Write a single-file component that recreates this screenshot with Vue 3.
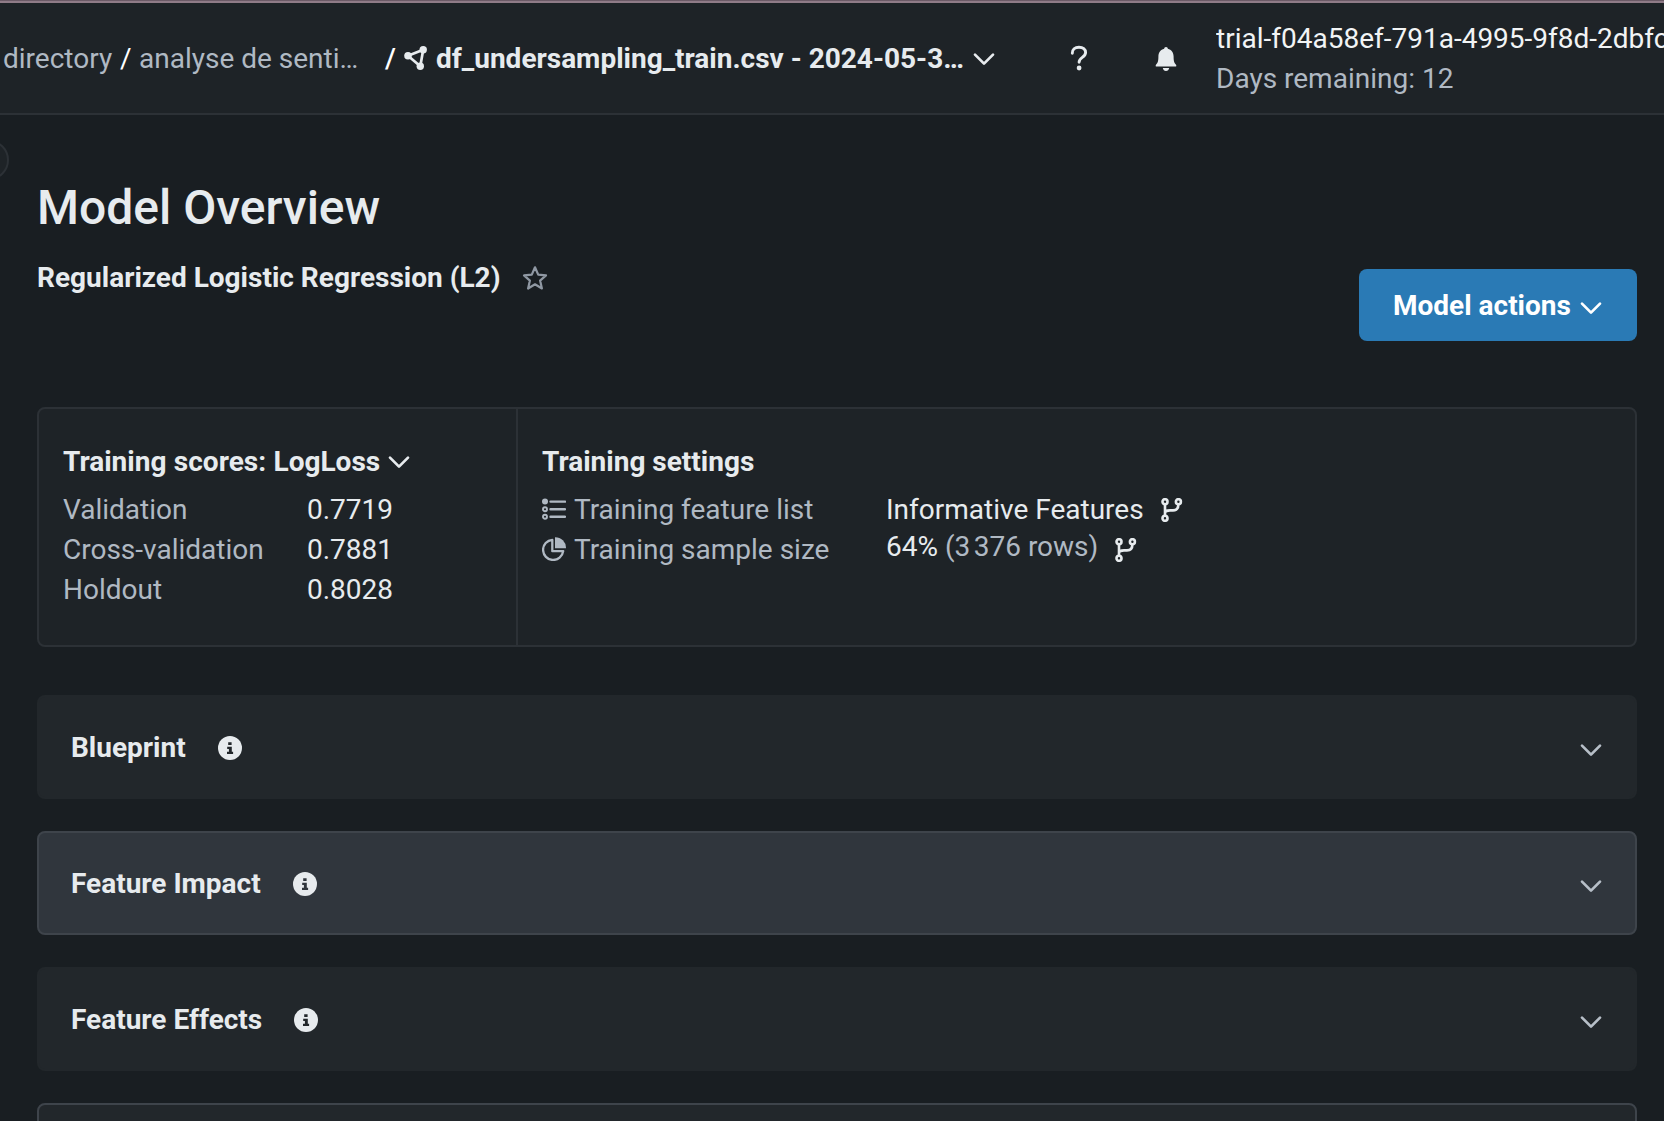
<script setup>
import { h } from 'vue'

const Chevron = () =>
  h('svg', { width: 24, height: 24, viewBox: '0 0 24 24', fill: 'none' }, [
    h('path', {
      d: 'M3 7.6 12 16.6 21 7.6',
      stroke: 'currentColor',
      'stroke-width': 2.7,
      'stroke-linecap': 'round',
      'stroke-linejoin': 'round',
    }),
  ])

const Branch = () =>
  h('svg', { width: 24, height: 24, viewBox: '0 0 24 24', fill: 'none', stroke: 'currentColor', 'stroke-width': 2.6 }, [
    h('circle', { cx: 5, cy: 3.7, r: 2.5 }),
    h('circle', { cx: 18.4, cy: 3.7, r: 2.5 }),
    h('circle', { cx: 5, cy: 20.3, r: 2.5 }),
    h('path', { d: 'M5 6.2V17.8M5 15.2C5 12.6 7 12.4 10 12.4H13C17 12.4 18.4 10.4 18.4 6.2' }),
  ])

const scores = [
  { name: 'Validation', value: '0.7719' },
  { name: 'Cross-validation', value: '0.7881' },
  { name: 'Holdout', value: '0.8028' },
]

const panels = [
  { title: 'Blueprint' },
  { title: 'Feature Impact', active: true },
  { title: 'Feature Effects' },
]
</script>

<template>
  <div class="page">
    <header class="topbar">
      <nav class="crumbs">
        <span class="muted dir">directory</span>
        <span class="slash first">/</span>
        <span class="muted project">analyse de senti…</span>
        <span class="slash second">/</span>
        <svg class="usecase" width="24" height="24" viewBox="0 0 24 24" fill="none">
          <path d="M4 9.8 19.2 3.8 16.3 20.2Z" stroke="currentColor" stroke-width="2.7" stroke-linejoin="round" />
          <circle cx="4" cy="9.8" r="3.8" fill="currentColor" />
          <circle cx="19.2" cy="3.8" r="3.7" fill="currentColor" />
          <circle cx="16.3" cy="20.2" r="3.7" fill="currentColor" />
        </svg>
        <strong class="current">df_undersampling_train.csv - 2024-05-3…</strong>
        <Chevron />
      </nav>
      <svg class="help" width="24" height="26" viewBox="0 0 24 26" fill="none">
        <path d="M5.300 8.300C5.100 4.300 8 2.200 12 2.200c4 0 6.600 2.100 6.600 5.300 0 5-6.500 4.800-6.500 9.700" stroke="currentColor" stroke-width="2.900" stroke-linecap="round" />
        <circle cx="12.100" cy="23" r="2.400" fill="currentColor" />
      </svg>
      <svg class="bell" width="24" height="26" viewBox="0 0 24 26" fill="currentColor">
        <path d="M12 1c1.1 0 1.800.7 1.800 1.800C17.500 3.700 19.600 6.500 19.600 10.500c0 5 .9 6.700 2.400 8.200.5.500.5 1.900-.5 1.900h-19c-1 0-1-1.400-.5-1.900 1.500-1.500 2.400-3.200 2.400-8.200C4.400 6.500 6.500 3.700 10.200 2.800 10.200 1.700 10.900 1 12 1Z" />
        <path d="M8.800 22h6.400c-.4 1.800-1.500 3-3.200 3s-2.800-1.200-3.200-3Z" />
      </svg>
      <div class="account">
        <div class="trial">trial-f04a58ef-791a-4995-9f8d-2dbfc</div>
        <div class="muted">Days remaining: 12</div>
      </div>
    </header>

    <main class="content">
      <span class="sidebar-toggle"></span>
      <section class="heading">
        <div>
          <h1>Model Overview</h1>
          <div class="model">
            <h2>Regularized Logistic Regression (L2)</h2>
            <svg class="star" width="26" height="26" viewBox="0 0 26 26" fill="none">
              <path d="M13 2.300 16.200 9.600 24 10.400 18.100 15.600 19.900 23.500 13 19.300 6.100 23.500 7.900 15.600 2 10.400 9.800 9.600Z" stroke="currentColor" stroke-width="2.200" stroke-linejoin="round" />
            </svg>
          </div>
        </div>
        <button class="actions"><span>Model actions</span><Chevron class="action-chevron" /></button>
      </section>

      <section class="summary">
        <div class="scores">
          <h3><span class="scores-title">Training scores: LogLoss</span><Chevron /></h3>
          <div v-for="s in scores" :key="s.name" class="score">
            <span class="muted">{{ s.name }}</span>
            <span>{{ s.value }}</span>
          </div>
        </div>
        <div class="settings">
          <h3>Training settings</h3>
          <div class="setting">
            <span class="label muted">
              <svg width="24" height="24" viewBox="0 0 24 24" fill="none" stroke="currentColor" stroke-width="2.400">
                <circle cx="3" cy="4.600" r="3" fill="currentColor" stroke="none" />
                <circle cx="3" cy="12.200" r="2" stroke-width="1.900" />
                <circle cx="3" cy="19.700" r="2" stroke-width="1.900" />
                <path d="M8.500 4.600H23M8.500 12.200H23M8.500 19.700H23" stroke-linecap="round" />
              </svg>
              Training feature list
            </span>
            <span class="value">Informative Features<Branch class="branch" /></span>
          </div>
          <div class="setting">
            <span class="label muted">
              <svg width="24" height="24" viewBox="0 0 24 24" fill="none">
                <path d="M10.300 2.800A10.100 10.100 0 1 0 21.200 14.200H10.300Z" stroke="currentColor" stroke-width="2.300" stroke-linejoin="round" />
                <path d="M13 .2A10.800 10.800 0 0 1 24 11.200H13Z" fill="currentColor" />
              </svg>
              Training sample size
            </span>
            <span class="value size">64%&nbsp;<span class="muted">(3&#8239;376 rows)</span><Branch class="branch" /></span>
          </div>
        </div>
      </section>

      <section class="panels">
        <article v-for="p in panels" :key="p.title" class="panel" :class="{ active: p.active }">
          <h3>{{ p.title }}</h3>
          <svg class="info" width="24" height="24" viewBox="0 0 24 24">
            <circle cx="12" cy="12" r="12" fill="currentColor" />
            <path class="glyph" d="M10.200 6.200h3.400v2.900h-3.400zM9.200 10.700h4.600v5h1.300v2.200H9v-2.200h1.900v-2.800H9.200z" />
          </svg>
          <Chevron class="toggle" />
        </article>
        <article class="panel outlined"></article>
      </section>
    </main>
  </div>
</template>

<style>
body {
  margin: 0;
  background: #191e22;
}
</style>

<style scoped>
.page {
  box-sizing: border-box;
  width: 1664px;
  height: 1121px;
  overflow: hidden;
  background: #191e22;
  color: #e7ebee;
  font: 400 28px/40px Roboto, sans-serif;
  white-space: nowrap;
}
svg {
  display: block;
  flex: none;
}
h1, h2, h3 {
  margin: 0;
  font-size: 28px;
  line-height: 40px;
  font-weight: 700;
}
.muted {
  color: #b0b9c3;
}
.topbar {
  box-sizing: border-box;
  display: flex;
  align-items: center;
  height: 115px;
  padding-top: 3px;
  border-bottom: 2px solid #2c3136;
  background: linear-gradient(#6b5a66 0 1px, #8f7b87 1px 3px, #1e2327 3px);
}
.crumbs {
  display: flex;
  align-items: center;
  width: 1067px;
  padding-top: 2px;
}
.dir { width: 117px; padding-left: 3px; }
.slash { color: #fff; }
.first { width: 19px; }
.project { width: 246px; }
.second { width: 19px; font-weight: 500; }
.usecase { margin: -2px 8px 0 0; }
.current { width: 536px; }
.help { margin-right: 63px; margin-left: 0; }
.bell { margin: 1px 38px 0 0; }
.account { flex: 1; width: 0; overflow: hidden; padding-top: 2px; }
.trial { color: #f2f4f5; }
.content {
  position: relative;
  padding: 63px 27px 0 37px;
}
.sidebar-toggle {
  position: absolute;
  box-sizing: border-box;
  left: -31px;
  top: 25px;
  width: 40px;
  height: 40px;
  border: 2px solid #2c3136;
  border-radius: 50%;
  background: #1e2327;
}
.heading {
  display: flex;
  justify-content: space-between;
  height: 229px;
}
h1 {
  font-size: 48px;
  line-height: 60px;
  font-weight: 500;
}
.model {
  display: flex;
  align-items: center;
  margin-top: 20px;
}
.star { margin: -1px 0 0 21.5px; color: #8f98a3; }
.actions {
  box-sizing: border-box;
  display: flex;
  align-items: center;
  width: 278px;
  height: 72px;
  margin-top: 91px;
  padding: 2px 0 0 34px;
  gap: 8px;
  border: 0;
  border-radius: 8px;
  background: #2a7ab5;
  color: #fff;
  font: inherit;
  font-weight: 700;
}
.action-chevron { margin-top: 3px; }
.summary {
  box-sizing: border-box;
  display: flex;
  height: 240px;
  border: 2px solid #2c3136;
  border-radius: 8px;
  background: #1e2327;
}
.scores {
  box-sizing: border-box;
  width: 479px;
  padding: 33px 24px;
  border-right: 2px solid #2c3136;
}
.summary h3 {
  display: flex;
  align-items: center;
  margin-bottom: 8px;
  gap: 7px;
}
.scores-title { word-spacing: 0.5px; }
.score {
  display: grid;
  grid-template-columns: 244px auto;
}
.settings { padding: 33px 24px; }
.setting { display: flex; height: 40px; }
.label {
  display: flex;
  align-items: center;
  gap: 8px;
  width: 344px;
}
.label svg { margin-top: -2px; }
.value { display: flex; align-items: center; }
.branch { margin: -1px 0 0 16px; }
.size { line-height: 34px; align-items: flex-start; }
.size .branch { margin-top: 8px; }
.panels {
  display: flex;
  flex-direction: column;
  gap: 32px;
  margin-top: 48px;
}
.panel {
  --surface: #22272b;
  box-sizing: border-box;
  display: flex;
  align-items: center;
  height: 104px;
  padding: 2px 32px 0;
  border: 2px solid var(--surface);
  border-radius: 8px;
  background: var(--surface);
}
.panel.active {
  --surface: #30363d;
  border-color: #3e444b;
}
.panel.outlined { border-color: #3e444b; }
.info { margin: 0 0 0 32px; }
.glyph { fill: var(--surface); }
.toggle { margin: 3px 0 0 auto; color: #b7bfc8; }
</style>
